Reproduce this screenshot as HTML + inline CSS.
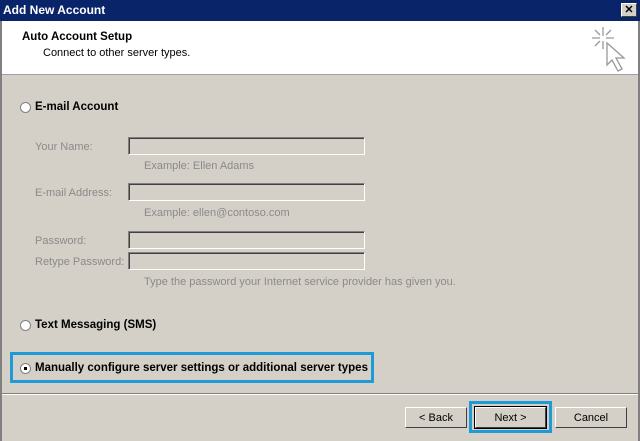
<!DOCTYPE html>
<html><head><style>
*{margin:0;padding:0;box-sizing:border-box}
body{width:640px;height:441px;background:#d4d0c8;font-family:"Liberation Sans",Arial,sans-serif;font-size:11px;position:relative;overflow:hidden;color:#000}
.a{position:absolute}
.title{left:0;top:0;width:640px;height:21px;background:#0a246a;color:#fff;font-weight:bold;font-size:12px;line-height:21px;padding-left:3px}
.x{right:3px;top:3px;width:16px;height:14px;background:#d4d0c8;border:1px solid;border-color:#fff #404040 #404040 #fff;color:#000;font-size:11px;line-height:12px;text-align:center;font-weight:bold}
.hdr{left:2px;top:21px;width:636px;height:54px;background:#fff;border-bottom:1px solid #a0a0a0}
.g{color:#8a8a8a}
.inp{left:128px;width:237px;height:18px;border:1px solid;border-color:#808080 #fff #fff #808080;box-shadow:inset 1px 1px 0 #404040;background:#d4d0c8}
.rad{width:11px;height:11px;border-radius:50%;background:#fff;border:1px solid #808080}
.btn{top:407px;height:21px;border:1px solid;border-color:#fff #404040 #404040 #fff;text-align:center;line-height:20px;background:#d4d0c8}
.hl{border:3px solid #1e9ad6}
.b{font-weight:bold;font-size:11.5px}
</style></head><body>
<div class="a" style="left:0;top:0;width:2px;height:441px;background:#808080"></div>
<div class="a" style="right:0;top:0;width:2px;height:441px;background:#808080"></div>
<div class="a title">Add New Account</div>
<div class="a x">✕</div>
<div class="a hdr">
 <div class="a b" style="left:20px;top:10px">Auto Account Setup</div>
 <div class="a" style="left:41px;top:26px">Connect to other server types.</div>
 <svg class="a" style="left:588px;top:5px" width="40" height="50" viewBox="0 0 40 50" fill="none" stroke="#999" stroke-width="1.3">
  <path d="M13 1v9M13 15v8M2 12h8M16 12h8M5 4l5 5M21 4l-5 5M5 20l5-5"/>
  <path d="M17 17l0 22 5-5 6 11 4-2-6-11 8 0z" fill="#fff"/>
 </svg>
</div>
<div class="a rad" style="left:20px;top:102px"></div>
<div class="a b" style="left:35px;top:101px">E-mail Account</div>
<div class="a g" style="left:35px;top:141px">Your Name:</div>
<div class="a inp" style="top:137px"></div>
<div class="a g" style="left:144px;top:160px">Example: Ellen Adams</div>
<div class="a g" style="left:35px;top:187px">E-mail Address:</div>
<div class="a inp" style="top:183px"></div>
<div class="a g" style="left:144px;top:207px">Example: ellen@contoso.com</div>
<div class="a g" style="left:35px;top:235px">Password:</div>
<div class="a inp" style="top:231px"></div>
<div class="a g" style="left:35px;top:256px">Retype Password:</div>
<div class="a inp" style="top:252px"></div>
<div class="a g" style="left:144px;top:276px">Type the password your Internet service provider has given you.</div>
<div class="a rad" style="left:20px;top:320px"></div>
<div class="a b" style="left:35px;top:319px">Text Messaging (SMS)</div>
<div class="a hl" style="left:10px;top:352px;width:364px;height:31px"></div>
<div class="a rad" style="left:20px;top:363px"><div style="width:3px;height:3px;background:#000;margin:3px"></div></div>
<div class="a b" style="left:35px;top:362px">Manually configure server settings or additional server types</div>
<div class="a" style="left:2px;top:393px;width:636px;height:2px;border-top:1px solid #808080;border-bottom:1px solid #fff"></div>
<div class="a btn" style="left:405px;width:62px">&lt; Back</div>
<div class="a hl" style="left:469px;top:401px;width:83px;height:32px"></div>
<div class="a btn" style="left:475px;width:71px;outline:1px solid #000">Next &gt;</div>
<div class="a btn" style="left:555px;width:72px">Cancel</div>
</body></html>
